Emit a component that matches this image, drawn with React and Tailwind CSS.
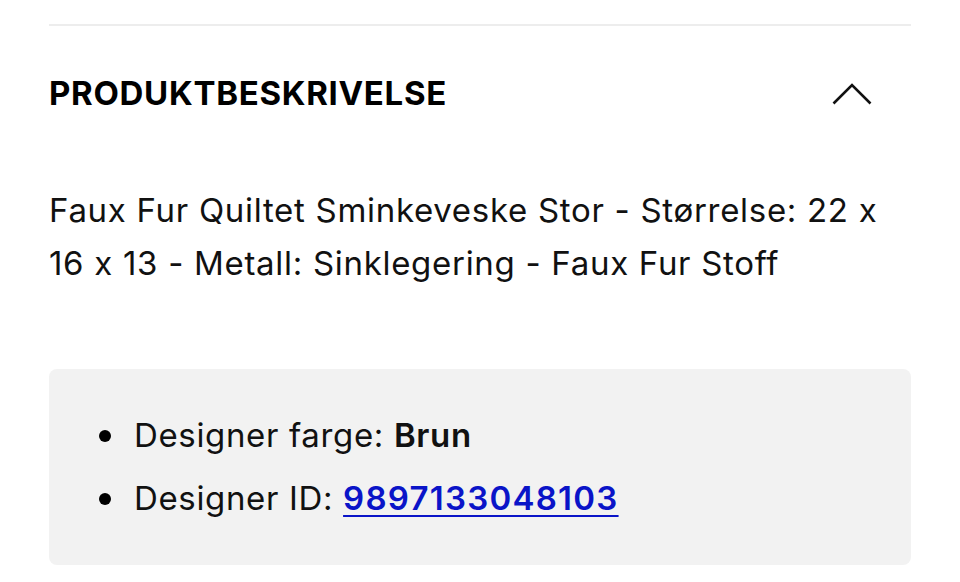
import React from 'react'

const details = [
  { label: 'Designer farge:', value: 'Brun' },
  { label: 'Designer ID:', value: '9897133048103', link: true },
]

export default function App() {
  return (
    <div className="min-h-screen bg-white px-[49px] pt-[24px] font-['Inter','Noto_Sans',sans-serif] text-black [font-feature-settings:'calt'_0]">
      <div className="border-t-2 border-[#ededed]" />

      {/* Accordion header */}
      <div className="mt-[34px] flex h-[68px] items-center justify-between">
        <h2 className="text-[33px] font-bold tracking-[0.7px]">PRODUKTBESKRIVELSE</h2>
        <button className="mr-[39px]">
          <svg width="40" height="24" viewBox="0 0 40 24" fill="none" stroke="#111" strokeWidth="2.6">
            <polyline points="1.5,21.5 20,3 38.5,21.5" />
          </svg>
        </button>
      </div>

      {/* Description */}
      <p className="mt-[56px] text-[33px] leading-[53px] tracking-[0.7px] text-[#111]">
        Faux Fur Quiltet Sminkeveske Stor - Størrelse: 22 x 16 x 13 - Metall: Sinklegering - Faux Fur Stoff
      </p>

      {/* Details */}
      <div className="mt-[79px] rounded-[8px] bg-[#f2f2f2] py-[35px] pl-[50px]">
        <ul className="text-[33px] leading-[63px] tracking-[0.65px] text-[#111]">
          {details.map((d) => (
            <li key={d.label} className="flex items-center">
              <span className="mr-[23px] h-[12px] w-[12px] rounded-full bg-black" />
              <span>
                {d.label}{' '}
                {d.link ? (
                  <a href="#" className="font-semibold tracking-[1.25px] text-[#0a14c8] underline decoration-2 underline-offset-[5px]">
                    {d.value}
                  </a>
                ) : (
                  <span className="font-semibold">{d.value}</span>
                )}
              </span>
            </li>
          ))}
        </ul>
      </div>
    </div>
  )
}
